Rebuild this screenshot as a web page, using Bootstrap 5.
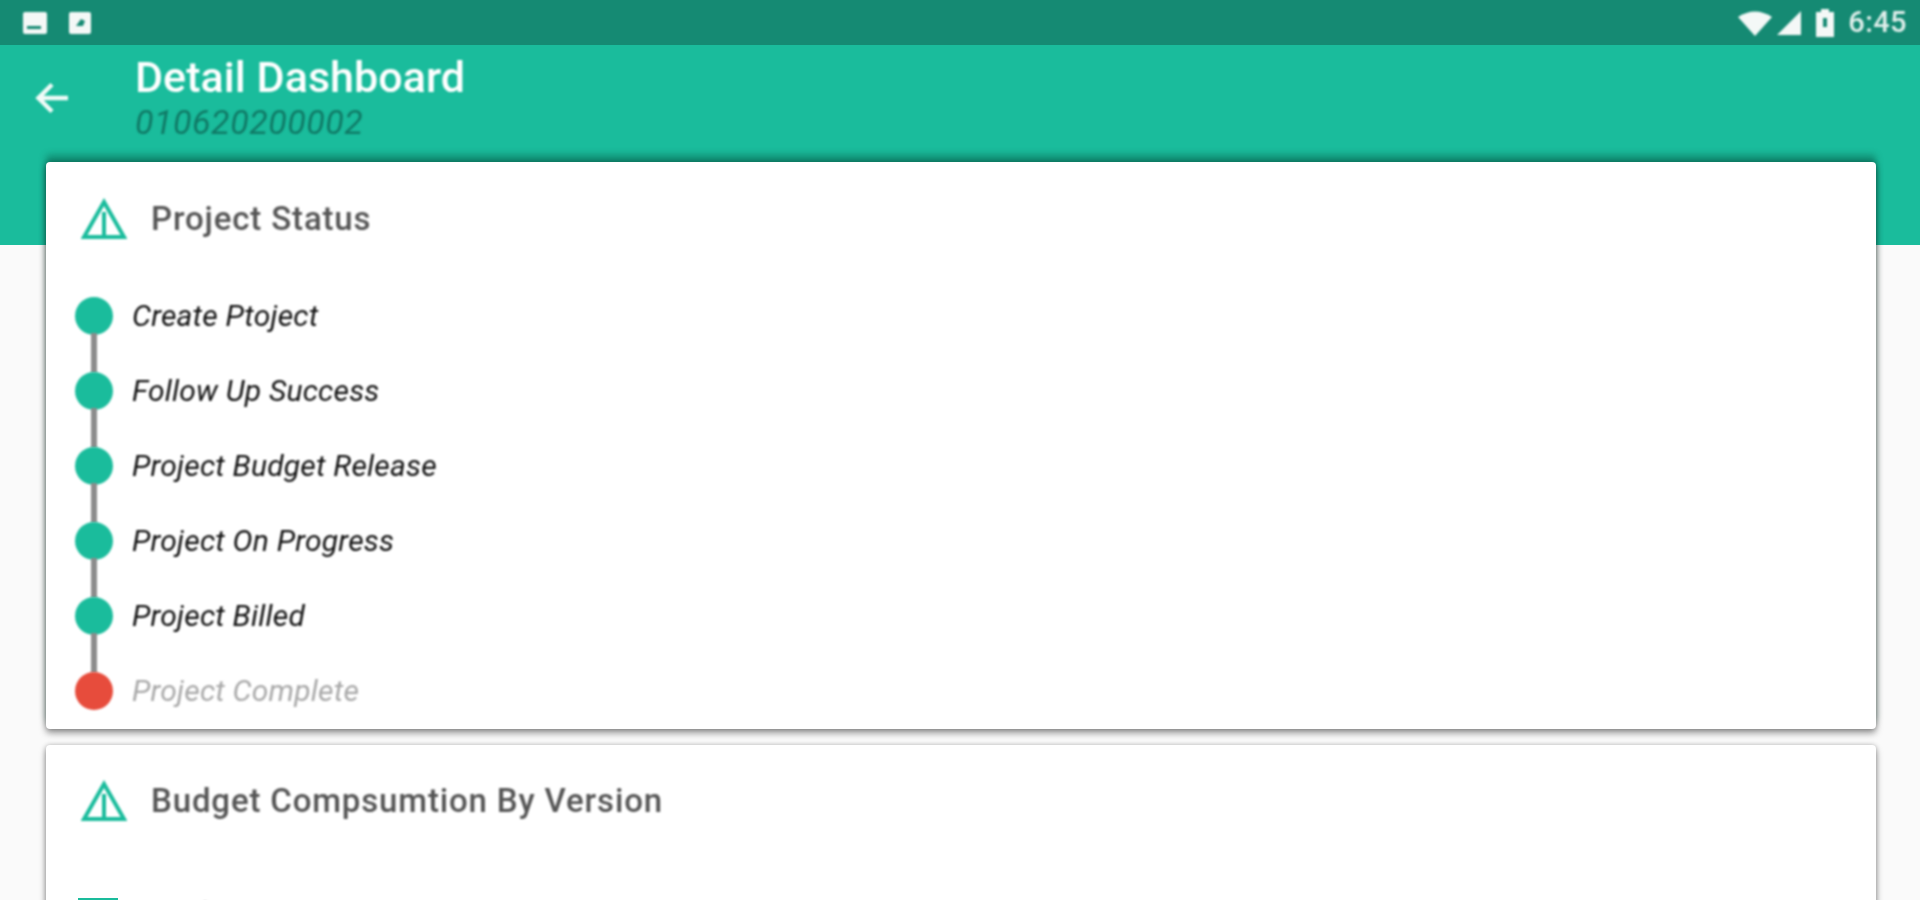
<!DOCTYPE html>
<html lang="en">
<head>
<meta charset="utf-8">
<title>Detail Dashboard</title>
<link href="https://cdn.jsdelivr.net/npm/bootstrap@5.3.0/dist/css/bootstrap.min.css" rel="stylesheet">
<style>
html,body{height:900px;overflow:hidden}
body{background:#fafafa;font-family:Roboto,"Liberation Sans",sans-serif}
.sb-bar svg,.hd-bar svg,.card-head svg,.sb-time,.hd-title,.hd-sub,.card-head h2,.step-text,.tile-text,.step-dot{filter:blur(.8px)}
.sb-bar{height:45px;background:#158a73;padding:0 13px 0 22px;color:#f2f8f6}
.sb-time{font-size:29px;font-weight:500;line-height:1;margin-left:13px;opacity:.92;letter-spacing:.4px}
.sig-gap{margin-right:13px}
.hd-bar{height:200px;background:#1abc9c}
.hd-back{width:135px;padding-left:35px;height:105px}
.hd-title{font-size:43px;font-weight:500;color:#fff;line-height:50px;padding-top:6px;margin-top:1px;letter-spacing:.05px}
.hd-sub{font-size:34px;font-style:italic;color:#107a66;line-height:40px;letter-spacing:.5px}
.main-wrap{margin-top:-83px;padding:0 44px 0 46px;position:relative}
.dash-card{border:0;border-radius:4px;background:#fff;box-shadow:0 4px 7px rgba(0,0,0,.4),0 0 5px rgba(0,0,0,.22)}
.card-a{height:567px;padding:37px 24px 0 35px;box-shadow:0 4px 7px rgba(0,0,0,.4),0 -7px 7px rgba(0,60,45,.38),0 0 5px rgba(0,0,0,.22)}
.card-b{height:300px;margin-top:16px;padding:36px 24px 0 35px}
.card-head{height:40px;gap:24px;margin-bottom:58px}
.card-head h2{font-size:33px;font-weight:500;color:#555;margin:0;line-height:40px;letter-spacing:.85px}
.step-list{padding-left:0;margin:0 0 0 -6px;list-style:none}
.step-row{height:75px;gap:19px}
.step-row:not(:last-child) .step-dot::after{content:"";position:absolute;left:16px;top:36px;width:6px;height:40px;background:#8c8c8c}
.step-dot{position:relative;width:38px;height:38px;border-radius:50%;background:#1abc9c;flex:none}
.step-dot.is-open{background:#e74c3c}
.step-text{font-size:30px;font-style:italic;color:#111;line-height:38px;letter-spacing:.2px}
.step-text.is-open{color:#a8a8a8}
.tile{width:40px;height:30px;background:#1abc9c;margin-left:-3px}
.tile-row{gap:32px;margin-top:19px}
.tile-text{font-size:30px;color:#888;font-style:italic;line-height:38px;margin-top:-4px}
</style>
</head>
<body>
<div class="sb-bar d-flex align-items-center justify-content-between">
  <div class="d-flex align-items-center gap-3">
    <svg width="26" height="24" viewBox="0 0 26 24"><rect x="1" y="1" width="24" height="22" rx="2" fill="#f4f8f7"/><rect x="5" y="15" width="14" height="3" fill="#158a73"/></svg>
    <svg width="24" height="24" viewBox="0 0 24 24" class="ms-1"><rect x="1" y="1" width="22" height="22" rx="2" fill="#f4f8f7"/><path d="M8 15l5-7 4 2-2 5z" fill="#158a73"/></svg>
  </div>
  <div class="d-flex align-items-center">
    <svg width="34" height="26" viewBox="0 0 34 26" class="me-1"><path d="M0 7Q17-4 34 7L17 26z" fill="#f4f8f7"/></svg>
    <svg width="26" height="26" viewBox="0 0 26 26" class="sig-gap"><path d="M25 1V25H1z" fill="#f4f8f7"/></svg>
    <svg width="20" height="28" viewBox="0 0 20 28"><path d="M6 0h8v3h5v25H1V3h5z" fill="#f4f8f7"/><rect x="8" y="9" width="4" height="9" fill="#158a73"/></svg>
    <span class="sb-time">6:45</span>
  </div>
</div>
<header class="hd-bar d-flex align-items-start">
  <div class="hd-back d-flex align-items-center flex-shrink-0">
    <svg width="34" height="32" viewBox="0 0 34 32" fill="none" stroke="#f1fbf8" stroke-width="4.500"><path d="M33 16H4M17 2.500 3.500 16 17 29.500"/></svg>
  </div>
  <div>
    <div class="hd-title">Detail Dashboard</div>
    <div class="hd-sub">010620200002</div>
  </div>
</header>
<main class="main-wrap">
  <section class="card dash-card card-a">
    <div class="card-head d-flex align-items-center">
      <svg width="46" height="42" viewBox="0 0 46 42" fill="none" stroke="#1abc9c" stroke-width="4" class="flex-shrink-0"><path d="M23 4 3 39H43zM23 14V39"/></svg>
      <h2>Project Status</h2>
    </div>
    <ul class="step-list">
      <li class="step-row d-flex align-items-start"><span class="step-dot"></span><span class="step-text">Create Ptoject</span></li>
      <li class="step-row d-flex align-items-start"><span class="step-dot"></span><span class="step-text">Follow Up Success</span></li>
      <li class="step-row d-flex align-items-start"><span class="step-dot"></span><span class="step-text">Project Budget Release</span></li>
      <li class="step-row d-flex align-items-start"><span class="step-dot"></span><span class="step-text">Project On Progress</span></li>
      <li class="step-row d-flex align-items-start"><span class="step-dot"></span><span class="step-text">Project Billed</span></li>
      <li class="step-row d-flex align-items-start"><span class="step-dot is-open"></span><span class="step-text is-open">Project Complete</span></li>
    </ul>
  </section>
  <section class="card dash-card card-b">
    <div class="card-head d-flex align-items-center">
      <svg width="46" height="42" viewBox="0 0 46 42" fill="none" stroke="#1abc9c" stroke-width="4" class="flex-shrink-0"><path d="M23 4 3 39H43zM23 14V39"/></svg>
      <h2>Budget Compsumtion By Version</h2>
    </div>
    <div class="tile-row d-flex align-items-start"><span class="tile"></span><span class="tile-text">Realization</span></div>
  </section>
</main>
</body>
</html>
